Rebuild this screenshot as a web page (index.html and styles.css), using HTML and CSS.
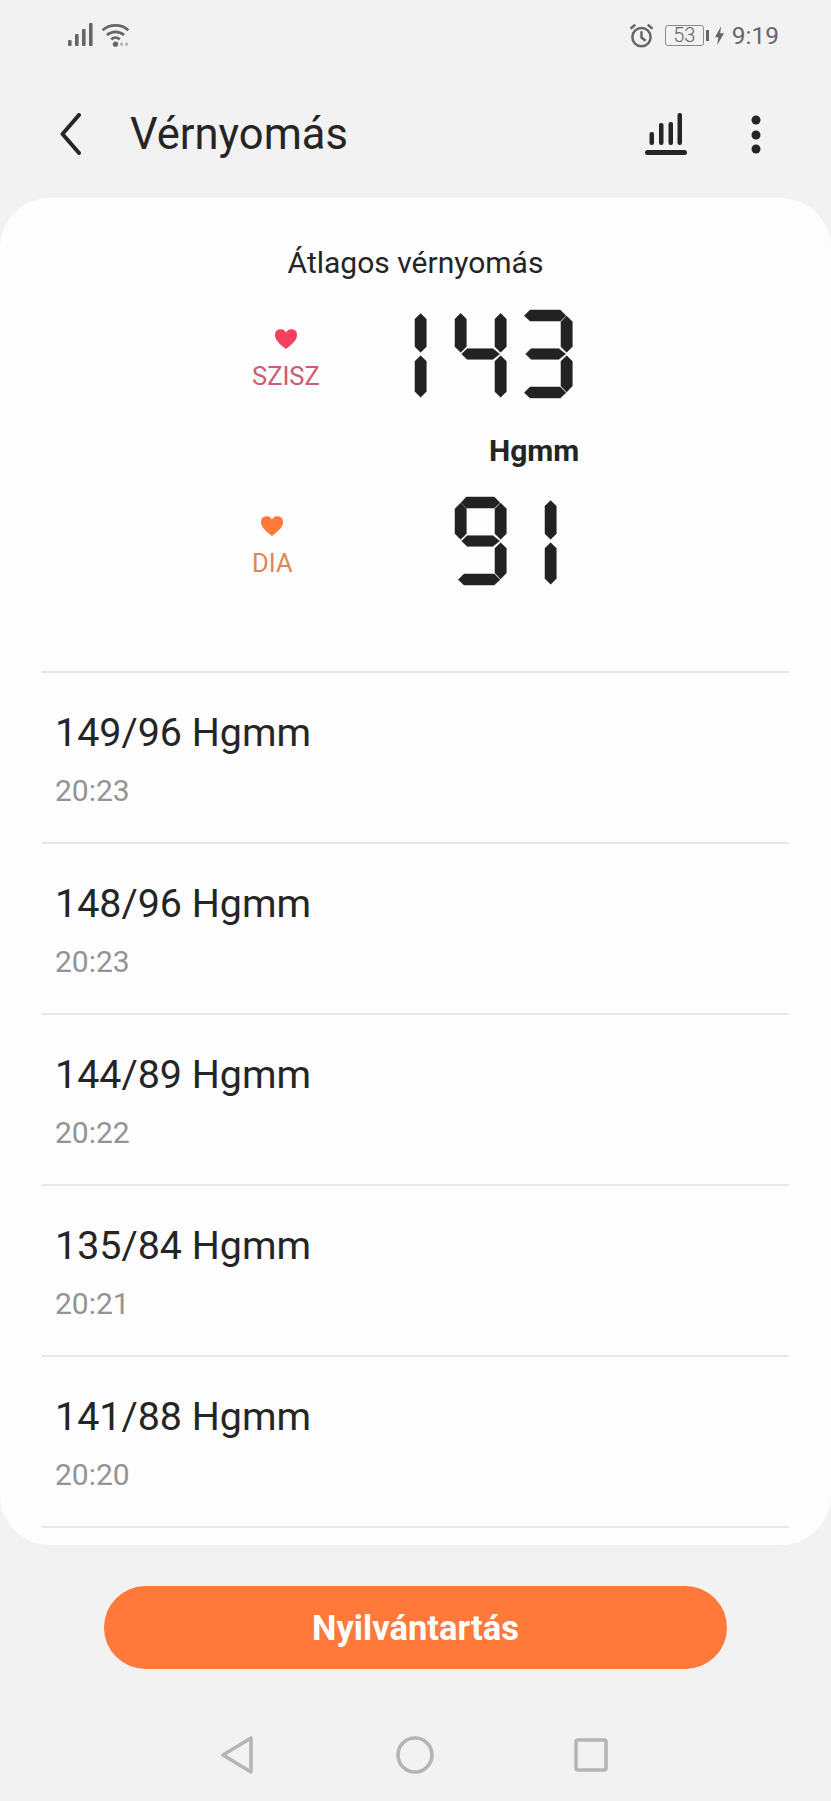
FILE: index.html
```html
<!DOCTYPE html>
<html lang="hu">
<head>
    <meta charset="UTF-8">
    <meta name="viewport" content="width=device-width, initial-scale=1.0">
    <title>Vérnyomás</title>
    <link rel="stylesheet" href="styles.css">
</head>
<body>
    <!-- seven segment parts, shared by the big readings -->
    <svg class="seg-defs" aria-hidden="true">
        <defs>
            <polygon id="seg-a" points="18,17 34,0 118,0 135,17 118,33 34,33"/>
            <polygon id="seg-a-long" points="10,17 27,0 118,0 135,17 118,33 27,33"/>
            <polygon id="seg-b" points="120,35 137,18 154,35 154,110 137,127 120,110"/>
            <polygon id="seg-b-long" points="120,27 137,10 154,27 154,110 137,127 120,110"/>
            <polygon id="seg-c" points="120,154 137,137 154,154 154,228 137,246 120,228"/>
            <polygon id="seg-c-long" points="120,154 137,137 154,154 154,245 137,262 120,245"/>
            <polygon id="seg-d-long" points="10,248 27,231 118,231 135,248 118,264 27,264"/>
            <polygon id="seg-f" points="0,35 17,18 34,35 34,110 17,127 0,110"/>
            <polygon id="seg-f-long" points="0,27 17,10 34,27 34,110 17,127 0,110"/>
            <polygon id="seg-g" points="20,132 36,116 114,116 134,132 114,148 36,148"/>
            <polygon id="seg-g-long" points="14,132 30,116 114,116 134,132 114,148 30,148"/>
        </defs>
    </svg>

    <div class="status-bar">
        <div class="status-group">
            <svg class="icon-signal" viewBox="0 0 25 23">
                <rect x="0" y="17" width="3.6" height="6" rx="1"/>
                <rect x="7" y="11" width="3.6" height="12" rx="1"/>
                <rect x="14" y="6" width="3.6" height="17" rx="1"/>
                <rect x="21" y="0" width="3.6" height="23" rx="1"/>
            </svg>
            <svg class="icon-wifi" viewBox="0 0 27 23">
                <path class="wifi-arc" d="M1.5 7.5C8 1.5 19 1.5 25.5 7.5"/>
                <path class="wifi-arc" d="M5.5 12C10 8 17 8 21.5 12"/>
                <path class="wifi-arc" d="M9.5 16C12 14 15 14 17.5 16"/>
                <circle cx="13.5" cy="20.5" r="2.5"/>
                <path class="wifi-mini" d="M20 18.5v4l-2.5-2zM23 18.5v4l2.5-2z"/>
            </svg>
        </div>
        <div class="status-group">
            <svg class="icon-alarm" viewBox="0 0 24 24">
                <circle class="alarm-line" cx="12" cy="13.500" r="8.800"/>
                <path class="alarm-line" d="M12 8v6l4 3"/>
                <path class="alarm-line" d="M1.500 5.500 6 1.500M22.500 5.500 18 1.500"/>
            </svg>
            <div class="battery">53</div>
            <div class="battery-nub"></div>
            <svg class="icon-bolt" viewBox="0 0 8 17">
                <path d="M5.500 0 0 10h3l-1 7 6-10.500H4.600z"/>
            </svg>
            <div class="clock">9:19</div>
        </div>
    </div>

    <header class="app-bar">
        <svg class="icon-back" viewBox="0 0 21 42">
            <path d="M19 2 2.500 21 19 40"/>
        </svg>
        <h1 class="app-title">Vérnyomás</h1>
        <svg class="icon-chart" viewBox="0 0 42 42">
            <rect x="4.500" y="19" width="4.500" height="13" rx="2"/>
            <rect x="14" y="10" width="4.500" height="22" rx="2"/>
            <rect x="23.500" y="9" width="4.500" height="23" rx="2"/>
            <rect x="32.500" y="0" width="4.500" height="32" rx="2"/>
            <rect x="0" y="37" width="42" height="5" rx="2.500"/>
        </svg>
        <svg class="icon-more" viewBox="0 0 10 39">
            <circle cx="5" cy="5" r="4.500"/>
            <circle cx="5" cy="20" r="4.500"/>
            <circle cx="5" cy="34" r="4.500"/>
        </svg>
    </header>

    <main class="card">
        <section class="summary">
            <h2 class="summary-title">Átlagos vérnyomás</h2>

            <div class="reading">
                <div class="reading-label label-sys">
                    <svg class="heart" viewBox="0 0 22 20"><path d="M11 20C4 14.500 0 11 0 6a5.700 5.700 0 0 1 11-2.200A5.700 5.700 0 0 1 22 6c0 5-4 8.500-11 14z"/></svg>
                    <span>SZISZ</span>
                </div>
                <div class="lcd">
                    <svg class="digit digit-one first-one" viewBox="120 0 34 264"><use href="#seg-b-long"/><use href="#seg-c-long"/></svg>
                    <svg class="digit" viewBox="0 0 154 264"><use href="#seg-f-long"/><use href="#seg-b-long"/><use href="#seg-g"/><use href="#seg-c-long"/></svg>
                    <svg class="digit" viewBox="0 0 154 264"><use href="#seg-a-long"/><use href="#seg-b"/><use href="#seg-g-long"/><use href="#seg-c"/><use href="#seg-d-long"/></svg>
                    <span class="lcd-value">143</span>
                </div>
            </div>

            <div class="unit">Hgmm</div>

            <div class="reading">
                <div class="reading-label label-dia">
                    <svg class="heart" viewBox="0 0 22 20"><path d="M11 20C4 14.500 0 11 0 6a5.700 5.700 0 0 1 11-2.200A5.700 5.700 0 0 1 22 6c0 5-4 8.500-11 14z"/></svg>
                    <span>DIA</span>
                </div>
                <div class="lcd">
                    <svg class="digit" viewBox="0 0 154 264"><use href="#seg-a"/><use href="#seg-f"/><use href="#seg-b"/><use href="#seg-g"/><use href="#seg-c"/><use href="#seg-d-long"/></svg>
                    <svg class="digit digit-one last-one" viewBox="120 0 34 264"><use href="#seg-b-long"/><use href="#seg-c-long"/></svg>
                    <span class="lcd-value">91</span>
                </div>
            </div>
        </section>

        <ul class="history">
            <li class="history-row">
                <div class="history-value">149/96 Hgmm</div>
                <div class="history-time">20:23</div>
            </li>
            <li class="history-row">
                <div class="history-value">148/96 Hgmm</div>
                <div class="history-time">20:23</div>
            </li>
            <li class="history-row">
                <div class="history-value">144/89 Hgmm</div>
                <div class="history-time">20:22</div>
            </li>
            <li class="history-row">
                <div class="history-value">135/84 Hgmm</div>
                <div class="history-time">20:21</div>
            </li>
            <li class="history-row">
                <div class="history-value">141/88 Hgmm</div>
                <div class="history-time">20:20</div>
            </li>
        </ul>
    </main>

    <button class="record-btn">Nyilvántartás</button>

    <nav class="nav-bar">
        <svg class="nav-back" viewBox="0 0 32 38"><path d="M30 2v34L2 19z"/></svg>
        <svg class="nav-home" viewBox="0 0 38 38"><circle cx="19" cy="19" r="17"/></svg>
        <svg class="nav-recent" viewBox="0 0 34 34"><rect x="2" y="2" width="30" height="30" rx="2"/></svg>
    </nav>
</body>
</html>
```

FILE: styles.css
```css
* {
    box-sizing: border-box;
}
body {
    margin: 0;
    width: 831px;
    height: 1801px;
    overflow: hidden;
    background: #f2f2f2;
    font-family: Roboto, 'Liberation Sans', sans-serif;
    color: #252525;
}
.seg-defs {
    position: absolute;
    width: 0;
    height: 0;
}

/* status bar */
.status-bar {
    height: 70px;
    padding: 24px 52px 0 68px;
    display: flex;
    justify-content: space-between;
    align-items: flex-start;
}
.status-group {
    display: flex;
    align-items: center;
    height: 23px;
    color: #666;
}
.icon-signal {
    width: 25px;
    height: 23px;
    margin-top: -2px;
    fill: #666;
}
.icon-wifi {
    width: 29px;
    height: 25px;
    margin-left: 8px;
    margin-top: -2px;
    fill: #666;
}
.wifi-arc {
    fill: none;
    stroke: #666;
    stroke-width: 2.6;
}
.wifi-mini {
    fill: #999;
}
.icon-alarm {
    width: 25px;
    height: 25px;
}
.alarm-line {
    fill: none;
    stroke: #666;
    stroke-width: 2.4;
}
.battery {
    width: 39px;
    height: 21px;
    margin-left: 11px;
    border: 1.5px solid #8a8a8a;
    border-radius: 3px;
    font-size: 20px;
    font-weight: 300;
    line-height: 18px;
    text-align: center;
}
.battery-nub {
    width: 3px;
    height: 11px;
    margin-left: 2px;
    background: #666;
}
.icon-bolt {
    width: 9px;
    height: 19px;
    margin-left: 6px;
    fill: #666;
}
.clock {
    margin-left: 8px;
    font-size: 24.5px;
    line-height: 23px;
}

/* app bar */
.app-bar {
    height: 128px;
    padding: 1px 70px 0 60px;
    display: flex;
    align-items: center;
}
.icon-back {
    width: 21px;
    height: 42px;
    margin-top: -1px;
    fill: none;
    stroke: #252525;
    stroke-width: 4;
    stroke-linecap: round;
    stroke-linejoin: round;
}
.app-title {
    margin: 0 0 0 49px;
    font-size: 43.5px;
    font-weight: 400;
    line-height: 52px;
}
.icon-chart {
    width: 42px;
    height: 42px;
    margin-left: auto;
    margin-top: -1px;
    fill: #252525;
}
.icon-more {
    width: 10px;
    height: 39px;
    margin-left: 64px;
    margin-top: -1px;
    fill: #252525;
}

/* white card */
.card {
    height: 1347px;
    background: #fdfdfd;
    border-radius: 50px;
    overflow: hidden;
}
.summary {
    height: 473px;
    padding-top: 48px;
}
.summary-title {
    margin: 0;
    font-size: 30px;
    font-weight: 400;
    line-height: 34px;
    text-align: center;
}
.reading {
    display: flex;
    justify-content: space-between;
    align-items: flex-start;
    padding: 0 259px 0 252px;
    margin-top: 30px;
}
.unit + .reading {
    margin-top: 29px;
}
.reading-label {
    display: flex;
    flex-direction: column;
    align-items: center;
    padding-top: 19px;
    font-size: 25.5px;
    line-height: 30px;
}
.heart {
    width: 22px;
    height: 20px;
    margin-bottom: 12px;
}
.label-sys {
    color: #cc5c72;
}
.label-sys .heart {
    fill: #f5405f;
}
.label-dia {
    color: #df8656;
}
.label-dia .heart {
    fill: #ff7a38;
}
.lcd {
    position: relative;
    display: flex;
    gap: 14px;
}
/* the number itself, kept as text over the drawn segments */
.lcd-value {
    position: absolute;
    top: 0;
    right: 0;
    font-size: 80px;
    line-height: 88px;
    white-space: nowrap;
    color: transparent;
}
.digit {
    display: block;
    width: 51.3px;
    height: 88px;
    fill: #222;
    stroke: #222;
    stroke-width: 1.5;
    overflow: visible;
}
.digit-one {
    width: 11.3px;
}
.first-one {
    margin-right: 15px;
}
.last-one {
    margin: 0 16px 0 24px;
}
.unit {
    margin-top: 36px;
    padding-left: 489px;
    font-size: 30px;
    font-weight: 700;
    line-height: 34px;
}

/* history list */
.history {
    list-style: none;
    margin: 0 42px;
    padding: 0;
    border-bottom: 2px solid #e8e8e8;
}
.history-row {
    height: 171px;
    padding: 37px 0 0 13px;
    border-top: 2px solid #e8e8e8;
}
.history-value {
    font-size: 39.4px;
    line-height: 46px;
}
.history-time {
    margin-top: 17px;
    font-size: 30px;
    line-height: 36px;
    color: #949494;
}

/* bottom */
.record-btn {
    display: block;
    width: 623px;
    height: 83px;
    margin: 41px 0 0 104px;
    padding: 0;
    border: none;
    border-radius: 42px;
    background: #ff793b;
    color: #fff;
    font-family: inherit;
    font-size: 34.6px;
    font-weight: 700;
}
.nav-bar {
    display: flex;
    align-items: center;
    margin-top: 67px;
    padding-left: 221px;
    fill: none;
    stroke: #b5b5b5;
    stroke-width: 3.6;
    stroke-linejoin: round;
}
.nav-back {
    width: 32px;
    height: 38px;
}
.nav-home {
    width: 38px;
    height: 38px;
    margin-left: 143px;
}
.nav-recent {
    width: 34px;
    height: 34px;
    margin-left: 140px;
}
```
